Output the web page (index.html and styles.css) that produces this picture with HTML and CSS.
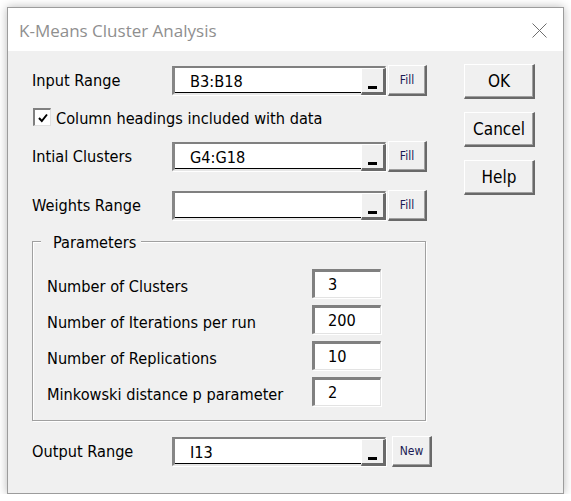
FILE: index.html
```html
<!DOCTYPE html>
<html>
<head>
<meta charset="utf-8">
<link rel="stylesheet" href="styles.css">
</head>
<body>
<div class="window">
  <div class="titlebar">
    <span class="title">K-Means Cluster Analysis</span>
    <svg class="close" width="15" height="15" viewBox="0 0 15 15"><path d="M0.5 0.5 L14.5 14.5 M14.5 0.5 L0.5 14.5" stroke="#6e6e6e" stroke-width="1" fill="none"/></svg>
  </div>
  <div class="content">
    <div class="left">
      <div class="row r1">
        <span class="label">Input Range</span>
        <div class="ref"><span class="val">B3:B18</span><span class="dash"><i></i></span></div>
        <button class="small fill">Fill</button>
      </div>
      <div class="row check">
        <span class="cbox"><svg width="12" height="12" viewBox="0 0 12 12"><path d="M2 6 L4.8 9 L10 2.5" stroke="#000" stroke-width="2" fill="none"/></svg></span>
        <span class="clabel">Column headings included with data</span>
      </div>
      <div class="row r3">
        <span class="label">Intial Clusters</span>
        <div class="ref"><span class="val">G4:G18</span><span class="dash"><i></i></span></div>
        <button class="small fill">Fill</button>
      </div>
      <div class="row r4">
        <span class="label">Weights Range</span>
        <div class="ref"><span class="val"></span><span class="dash"><i></i></span></div>
        <button class="small fill">Fill</button>
      </div>
      <div class="group">
        <span class="legend">Parameters</span>
        <div class="prow"><span class="plabel">Number of Clusters</span><span class="num">3</span></div>
        <div class="prow"><span class="plabel">Number of Iterations per run</span><span class="num">200</span></div>
        <div class="prow"><span class="plabel">Number of Replications</span><span class="num">10</span></div>
        <div class="prow"><span class="plabel">Minkowski distance p parameter</span><span class="num">2</span></div>
      </div>
      <div class="row out">
        <span class="label">Output Range</span>
        <div class="ref"><span class="val">I13</span><span class="dash"><i></i></span></div>
        <button class="small new">New</button>
      </div>
    </div>
    <div class="right">
      <button class="big">OK</button>
      <button class="big">Cancel</button>
      <button class="big">Help</button>
    </div>
  </div>
</div>
</body>
</html>
```

FILE: styles.css
```css
html, body {
  margin: 0;
  padding: 0;
  background: #ffffff;
}
body {
  font-family: "DejaVu Sans Condensed", "DejaVu Sans", sans-serif;
  font-stretch: condensed;
  color: #000;
}
.window {
  margin: 7px 0 0 7px;
  width: 555px;
  height: 485px;
  border: 1px solid #9c9c9c;
  background: #f0f0f0;
  box-shadow: 0 0 9px rgba(0,0,0,0.28);
}
.titlebar {
  height: 43px;
  background: #ffffff;
  display: flex;
  align-items: center;
  justify-content: space-between;
  padding: 0 16px 0 11px;
}
.title {
  font-family: "Open Sans", "Noto Sans", sans-serif;
  font-stretch: normal;
  font-size: 17px;
  color: #8f8f8f;
  margin-top: 2px;
}
.close {
  display: block;
  margin-top: 1px;
}
.content {
  display: flex;
}
.left {
  padding-left: 24px;
  width: 400px;
}
.right {
  margin-left: 32px;
  padding-top: 13px;
  display: flex;
  flex-direction: column;
  gap: 13px;
}
.row {
  display: flex;
  align-items: center;
  height: 32px;
}
.r1 { margin-top: 13px; }
.check { margin-top: 12px; height: 18px; }
.r3 { margin-top: 14px; }
.r4 { margin-top: 17px; }
.out { margin-top: 14px; }
.label {
  width: 140px;
  font-size: 16.2px;
  padding-top: 1px;
}
.ref {
  width: 214px;
  height: 29px;
  box-sizing: border-box;
  background: #fff;
  border-top: 2px solid #808080;
  border-left: 3px solid #868686;
  border-right: 1px solid #fff;
  border-bottom: 2px solid #e6e6e6;
  box-shadow: inset 0 -1px 0 #000, 1px 1px 0 #fff;
  display: flex;
  align-items: center;
  position: relative;
}
.val {
  flex: 1;
  padding-left: 15px;
  padding-top: 2px;
  font-size: 16.2px;
  color: #000;
}
.dash {
  width: 25px;
  height: 27px;
  box-sizing: border-box;
  background: #f0f0f0;
  border-left: 1px solid #fff;
  border-top: 1px solid #fff;
  border-right: 3px solid #6a6a6a;
  border-bottom: 3px solid #6a6a6a;
  align-self: flex-start;
  display: flex;
  align-items: flex-end;
  justify-content: center;
  padding-bottom: 3px;
  margin-right: -1px;
}
.dash i {
  display: block;
  width: 9px;
  height: 3px;
  background: #000;
}
button {
  font-family: "DejaVu Sans Condensed", "DejaVu Sans", sans-serif;
  font-stretch: condensed;
  background: #f0f0f0;
  border-top: 1px solid #fff;
  border-left: 1px solid #fff;
  border-right: 2px solid #696969;
  border-bottom: 2px solid #696969;
  box-shadow: inset -1px -1px 0 #a0a0a0;
  padding: 0;
  color: #000;
  box-sizing: border-box;
}
.small {
  height: 31px;
  font-size: 12px;
  color: #1a1a55;
}
.fill {
  width: 39px;
  margin-left: 2px;
}
.new {
  width: 40px;
  margin-left: 6px;
}
.big {
  width: 71px;
  height: 35px;
  font-size: 17px;
}
.cbox {
  width: 18px;
  height: 18px;
  box-sizing: border-box;
  margin-left: 1px;
  background: #fff;
  border-top: 2px solid #808080;
  border-left: 2px solid #808080;
  border-right: 1px solid #e0e0e0;
  border-bottom: 1px solid #e0e0e0;
  display: flex;
  align-items: center;
  justify-content: center;
}
.clabel {
  margin-left: 5px;
  font-size: 16.2px;
  padding-top: 2px;
}
.group {
  margin-top: 20px;
  width: 394px;
  height: 180px;
  box-sizing: border-box;
  border: 1px solid #a0a0a0;
  box-shadow: inset 1px 1px 0 #fff, 1px 1px 0 #fff;
  position: relative;
  padding: 27px 0 0 14px;
  display: flex;
  flex-direction: column;
  gap: 7px;
}
.legend {
  position: absolute;
  top: -9px;
  left: 8px;
  padding: 0 5px 0 12px;
  background: #f0f0f0;
  font-size: 16.2px;
  line-height: 20px;
}
.prow {
  display: flex;
  align-items: center;
  height: 29px;
}
.plabel {
  width: 265px;
  font-size: 16.2px;
  padding-top: 6px;
}
.num {
  width: 69px;
  height: 29px;
  box-sizing: border-box;
  background: #fff;
  border-top: 3px solid #808080;
  border-left: 3px solid #808080;
  border-right: 1px solid #e3e3e3;
  border-bottom: 1px solid #e3e3e3;
  box-shadow: 1px 1px 0 #fff;
  padding-left: 13px;
  font-size: 16.2px;
  display: flex;
  align-items: center;
}
```
